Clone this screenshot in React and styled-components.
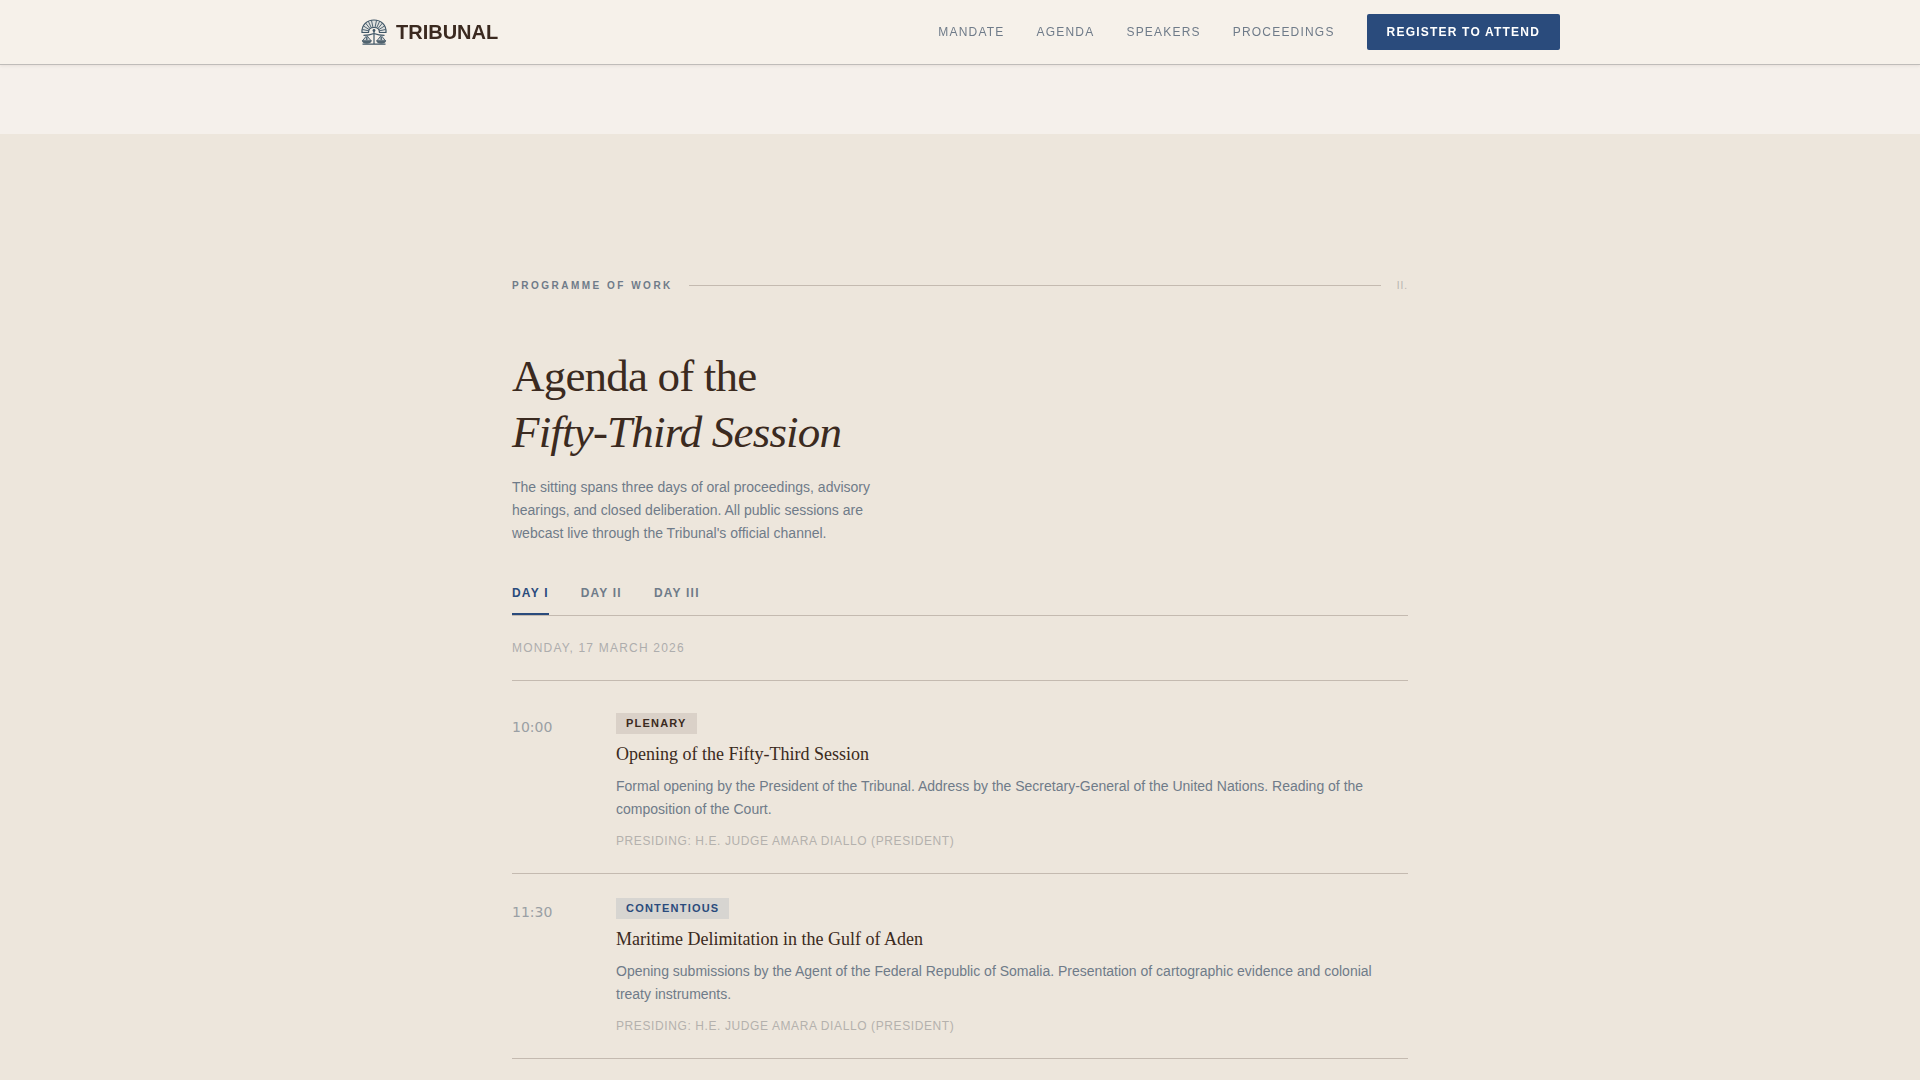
import React, { useState } from 'react';
import styled, { createGlobalStyle, css } from 'styled-components';

const ink = '#3b2a20';
const slate = '#6f7b89';
const muted = '#adadad';
const navy = '#2a4b7c';
const line = '#c4bab0';

const GlobalStyle = createGlobalStyle`
  * {
    box-sizing: border-box;
  }
  body {
    margin: 0;
    font-family: 'Liberation Sans', Arial, sans-serif;
    font-size: 14px;
    background-color: #f5f0eb;
    color: ${slate};
  }
`;

const Page = styled.div`
  min-height: 100vh;
  max-height: 100vh;
  overflow: hidden;
`;

const Header = styled.header`
  position: sticky;
  top: 0;
  background-color: #f6f1ea;
  border-bottom: 1px solid #bfbcb9;
  box-shadow: 0 1px 3px rgba(59, 40, 32, 0.08);
`;

const HeaderInner = styled.div`
  display: flex;
  align-items: center;
  justify-content: space-between;
  max-width: 1200px;
  height: 64px;
  margin: 0 auto;
`;

const Brand = styled.a`
  display: flex;
  align-items: center;
  gap: 8px;
  font-size: 20px;
  font-weight: 700;
  color: ${ink};
  text-decoration: none;
`;

const Nav = styled.nav`
  display: flex;
  align-items: center;
  gap: 32px;
`;

const NavLink = styled.a`
  font-size: 12px;
  letter-spacing: 0.1em;
  text-transform: uppercase;
  color: ${slate};
  text-decoration: none;
`;

const RegisterButton = styled.button`
  height: 36px;
  padding: 0 20px;
  border: none;
  border-radius: 2px;
  background-color: ${navy};
  color: #ffffff;
  font-family: inherit;
  font-size: 12px;
  font-weight: 700;
  letter-spacing: 0.1em;
  text-transform: uppercase;
  cursor: pointer;
`;

const Section = styled.section`
  margin-top: 69px;
  padding: 144px 24px 96px;
  background-color: #ede6dc;
`;

const Container = styled.div`
  max-width: 896px;
  margin: 0 auto;
`;

const Eyebrow = styled.div`
  display: flex;
  align-items: center;
  gap: 16px;
  height: 15px;
  margin-bottom: 55px;
`;

const EyebrowLabel = styled.span`
  font-size: 10px;
  font-weight: 700;
  letter-spacing: 0.25em;
  text-transform: uppercase;
`;

const EyebrowRule = styled.span`
  flex: 1;
  height: 1px;
  background-color: ${line};
`;

const EyebrowNumber = styled.span`
  font-size: 10px;
  letter-spacing: 0.1em;
  color: #b8b4b0;
`;

const Title = styled.h1`
  margin: 0 0 16px;
  font-family: 'Liberation Serif', 'Times New Roman', serif;
  font-size: 45px;
  font-weight: 400;
  line-height: 56px;
  letter-spacing: -0.018em;
  color: ${ink};
`;

const Intro = styled.p`
  max-width: 384px;
  margin: 0 0 28px;
  line-height: 23px;
`;

const Tabs = styled.div`
  display: flex;
  gap: 32px;
  border-bottom: 1px solid ${line};
`;

const Tab = styled.button`
  height: 42px;
  padding: 0;
  border: none;
  border-bottom: 2px solid transparent;
  background: none;
  color: ${slate};
  font-family: inherit;
  font-size: 12px;
  font-weight: 700;
  letter-spacing: 0.1em;
  text-transform: uppercase;
  cursor: pointer;
  ${(props) =>
    props.$active &&
    css`
      color: ${navy};
      border-bottom-color: ${navy};
    `}
`;

const DayDate = styled.p`
  margin: 0 0 8px;
  padding: 24px 0;
  border-bottom: 1px solid ${line};
  font-size: 12px;
  line-height: 16px;
  letter-spacing: 0.1em;
  text-transform: uppercase;
  color: ${muted};
`;

const Sittings = styled.ol`
  margin: 0;
  padding: 0;
  list-style: none;
`;

const Sitting = styled.li`
  display: grid;
  grid-template-columns: 80px 1fr;
  gap: 24px;
  padding: 24px 0;
  border-bottom: 1px solid ${line};
`;

const Time = styled.time`
  padding-top: 4px;
  font-family: 'DejaVu Sans', sans-serif;
  line-height: 20px;
  color: #9a9fa4;
`;

const Badge = styled.span`
  display: block;
  width: fit-content;
  margin-bottom: 8px;
  padding: 0 10px;
  background-color: ${(props) => (props.$kind === 'Contentious' ? '#d7d5d1' : '#dad1c8')};
  color: ${(props) => (props.$kind === 'Contentious' ? navy : ink)};
  font-size: 11px;
  font-weight: 700;
  line-height: 21px;
  letter-spacing: 0.11em;
  text-transform: uppercase;
`;

const SittingTitle = styled.h3`
  margin: 0 0 9px;
  font-family: 'Liberation Serif', 'Times New Roman', serif;
  font-size: 18px;
  font-weight: 400;
  line-height: 24px;
  color: ${ink};
`;

const Description = styled.p`
  margin: 0 0 12px;
  line-height: 23px;
`;

const Presiding = styled.p`
  margin: 0;
  font-size: 12px;
  line-height: 16px;
  letter-spacing: 0.05em;
  text-transform: uppercase;
  color: #b4b1ad;
`;

const days = [
  { label: 'Day I', date: 'Monday, 17 March 2026' },
  { label: 'Day II', date: 'Tuesday, 18 March 2026' },
  { label: 'Day III', date: 'Wednesday, 19 March 2026' },
];

const sittings = [
  {
    time: '10:00',
    kind: 'Plenary',
    title: 'Opening of the Fifty-Third Session',
    description:
      'Formal opening by the President of the Tribunal. Address by the Secretary-General of the United Nations. Reading of the composition of the Court.',
    presiding: 'H.E. Judge Amara Diallo (President)',
  },
  {
    time: '11:30',
    kind: 'Contentious',
    title: 'Maritime Delimitation in the Gulf of Aden',
    description:
      'Opening submissions by the Agent of the Federal Republic of Somalia. Presentation of cartographic evidence and colonial treaty instruments.',
    presiding: 'H.E. Judge Amara Diallo (President)',
  },
];

// Fan-shaped assembly hall above a pair of scales
const Emblem = () => (
  <svg width="28" height="28" viewBox="0 0 28 28" fill="none" stroke="#3f5666" aria-hidden="true">
    <path d="M2 14.500C1.500 7 7 2 14 2s12.500 5 12 12.500h-6.500C19.500 11 17.500 9.500 14 9.500S8.500 11 8.500 14.500z" fill="#dfe1df" strokeWidth="1.200" />
    <path d="M8.500 12.800 2.500 11.500M9 11.500 3.500 8M10 10.500 5.500 5M11.300 9.800 8.300 3.200M13 9.500 11.500 2.500M15 9.500 16.500 2.500M16.700 9.800 19.700 3.200M18 10.500 22.500 5M19 11.500 24.500 8M19.500 12.800 25.500 11.500" strokeWidth="0.900" />
    <path d="M14 12V26M3.500 17.300c4 0 7-.4 10.500-1.800 3.500 1.400 6.500 1.800 10.500 1.800M2.500 26.200h23" strokeWidth="1.200" />
    <circle cx="14" cy="12.500" r="1.400" fill="#3f5666" stroke="none" />
    <path d="M6.800 17.500 2.300 23h9zM21.200 17.500 16.700 23h9z" fill="#ccd1d1" strokeWidth="0.900" />
    <path d="M1.800 22.600h10c-.6 2.300-2.300 3.200-5 3.200s-4.400-.9-5-3.200zM16.200 22.600h10c-.6 2.300-2.300 3.200-5 3.200s-4.400-.9-5-3.200z" fill="#50636f" stroke="none" />
    <path d="M6.800 19v3M21.200 19v3" strokeWidth="1.200" />
  </svg>
);

const App = () => {
  const [activeDay, setActiveDay] = useState(0);

  return (
    <Page>
      <GlobalStyle />
      <Header>
        <HeaderInner>
          <Brand href="#top">
            <Emblem />
            TRIBUNAL
          </Brand>
          <Nav>
            <NavLink href="#mandate">Mandate</NavLink>
            <NavLink href="#agenda">Agenda</NavLink>
            <NavLink href="#speakers">Speakers</NavLink>
            <NavLink href="#proceedings">Proceedings</NavLink>
            <RegisterButton type="button">Register to Attend</RegisterButton>
          </Nav>
        </HeaderInner>
      </Header>
      <Section id="agenda">
        <Container>
          <Eyebrow>
            <EyebrowLabel>Programme of Work</EyebrowLabel>
            <EyebrowRule />
            <EyebrowNumber>II.</EyebrowNumber>
          </Eyebrow>
          <Title>
            Agenda of the
            <br />
            <em>Fifty-Third Session</em>
          </Title>
          <Intro>
            The sitting spans three days of oral proceedings, advisory hearings, and closed
            deliberation. All public sessions are webcast live through the Tribunal's official
            channel.
          </Intro>
          <Tabs role="tablist">
            {days.map((day, i) => (
              <Tab
                key={day.label}
                type="button"
                role="tab"
                aria-selected={i === activeDay}
                $active={i === activeDay}
                onClick={() => setActiveDay(i)}
              >
                {day.label}
              </Tab>
            ))}
          </Tabs>
          <DayDate>{days[activeDay].date}</DayDate>
          <Sittings>
            {sittings.map((item) => (
              <Sitting key={item.time}>
                <Time>{item.time}</Time>
                <div>
                  <Badge $kind={item.kind}>{item.kind}</Badge>
                  <SittingTitle>{item.title}</SittingTitle>
                  <Description>{item.description}</Description>
                  <Presiding>Presiding: {item.presiding}</Presiding>
                </div>
              </Sitting>
            ))}
          </Sittings>
        </Container>
      </Section>
    </Page>
  );
};

export default App;
